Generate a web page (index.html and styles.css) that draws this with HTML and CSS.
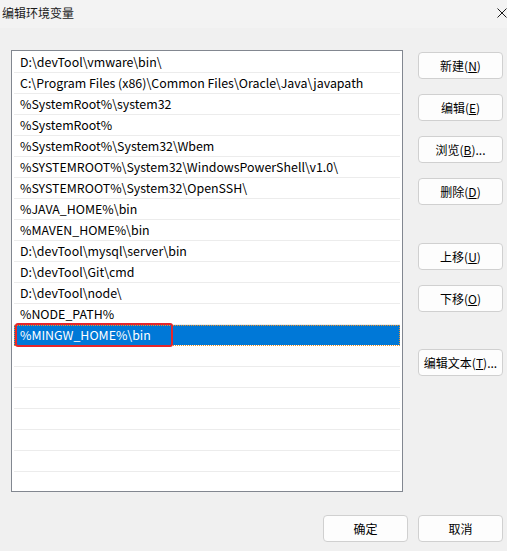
FILE: index.html
```html
<!DOCTYPE html>
<html lang="zh-CN">
<head>
<meta charset="utf-8">
<title>编辑环境变量</title>
<link rel="stylesheet" href="styles.css">
</head>
<body>
<div class="window">
  <div class="titlebar">
    <span class="title">编辑环境变量</span>
    <svg class="close" width="10" height="10" viewBox="0 0 10 10"><path d="M0.5 0.5 L9.5 9.5 M9.5 0.5 L0.5 9.5" stroke="#1a1a1a" stroke-width="1" fill="none"/></svg>
  </div>
  <div class="main">
    <div class="list">
      <div class="row">D:\devTool\vmware\bin\</div>
      <div class="row">C:\Program Files (x86)\Common Files\Oracle\Java\javapath</div>
      <div class="row">%SystemRoot%\system32</div>
      <div class="row">%SystemRoot%</div>
      <div class="row">%SystemRoot%\System32\Wbem</div>
      <div class="row">%SYSTEMROOT%\System32\WindowsPowerShell\v1.0\</div>
      <div class="row">%SYSTEMROOT%\System32\OpenSSH\</div>
      <div class="row">%JAVA_HOME%\bin</div>
      <div class="row">%MAVEN_HOME%\bin</div>
      <div class="row">D:\devTool\mysql\server\bin</div>
      <div class="row">D:\devTool\Git\cmd</div>
      <div class="row">D:\devTool\node\</div>
      <div class="row">%NODE_PATH%</div>
      <div class="row selected">%MINGW_HOME%\bin<span class="mark"></span></div>
      <div class="row"></div>
      <div class="row"></div>
      <div class="row"></div>
      <div class="row"></div>
      <div class="row"></div>
      <div class="row"></div>
      <div class="row"></div>
    </div>
    <div class="side">
      <button class="btn">新建(<u>N</u>)</button>
      <button class="btn">编辑(<u>E</u>)</button>
      <button class="btn">浏览(<u>B</u>)...</button>
      <button class="btn">删除(<u>D</u>)</button>
      <button class="btn sep">上移(<u>U</u>)</button>
      <button class="btn">下移(<u>O</u>)</button>
      <button class="btn sep2">编辑文本(<u>T</u>)...</button>
    </div>
  </div>
  <div class="footer">
    <button class="btn">确定</button>
    <button class="btn">取消</button>
  </div>
</div>
</body>
</html>
```

FILE: styles.css
```css
* { box-sizing: border-box; }
html, body { margin: 0; padding: 0; }
body {
  width: 507px;
  height: 551px;
  overflow: hidden;
  background: #f0f0f0;
  font-family: "Noto Sans CJK SC", "Noto Sans", sans-serif;
  font-size: 12px;
  color: #000;
}
.window { width: 507px; height: 551px; display: flex; flex-direction: column; }
.titlebar {
  height: 28px;
  background: #f3f3f3;
  display: flex;
  align-items: center;
  padding-left: 2px;
}
.title { font-size: 12px; color: #1a1a1a; line-height: 14px; margin-top: -2px; }
.close { margin-left: auto; margin-right: 0; margin-top: -2px; }
.main {
  display: flex;
  margin-top: 22px;
  margin-left: 11px;
  gap: 15px;
}
.list {
  width: 392px;
  height: 442px;
  border: 1px solid #828790;
  background: #fff;
  padding: 1px 1px 0;
  overflow: hidden;
}
.row {
  height: 21px;
  margin: 0 1px;
  border-bottom: 1px solid #ececec;
  padding-left: 6px;
  line-height: 20px;
  font-size: 12.4px;
  white-space: nowrap;
  position: relative;
}
.row.selected {
  background: #0078d7;
  color: #fff;
  border-bottom-color: #fff;
  outline: 1px dotted #e8912d;
  outline-offset: -1px;
}
.mark {
  position: absolute;
  left: 1px;
  top: -2px;
  width: 158px;
  height: 24px;
  border: 2px solid #e5262a;
  border-radius: 3px;
}
.side {
  display: flex;
  flex-direction: column;
  gap: 15px;
  margin-top: 2px;
}
.btn {
  width: 85px;
  height: 27px;
  background: #fdfdfd;
  border: 1px solid #d0d0d0;
  border-radius: 4px;
  font-family: "Noto Sans CJK SC", "Noto Sans", sans-serif;
  font-size: 12px;
  color: #000;
  padding: 0;
  line-height: 25px;
  text-align: center;
}
.btn u { text-underline-offset: 1px; }
.btn.sep { margin-top: 23px; }
.btn.sep2 { margin-top: 22px; }
.footer {
  display: flex;
  justify-content: flex-end;
  gap: 10px;
  margin-top: 23px;
  padding-right: 4px;
}
```
